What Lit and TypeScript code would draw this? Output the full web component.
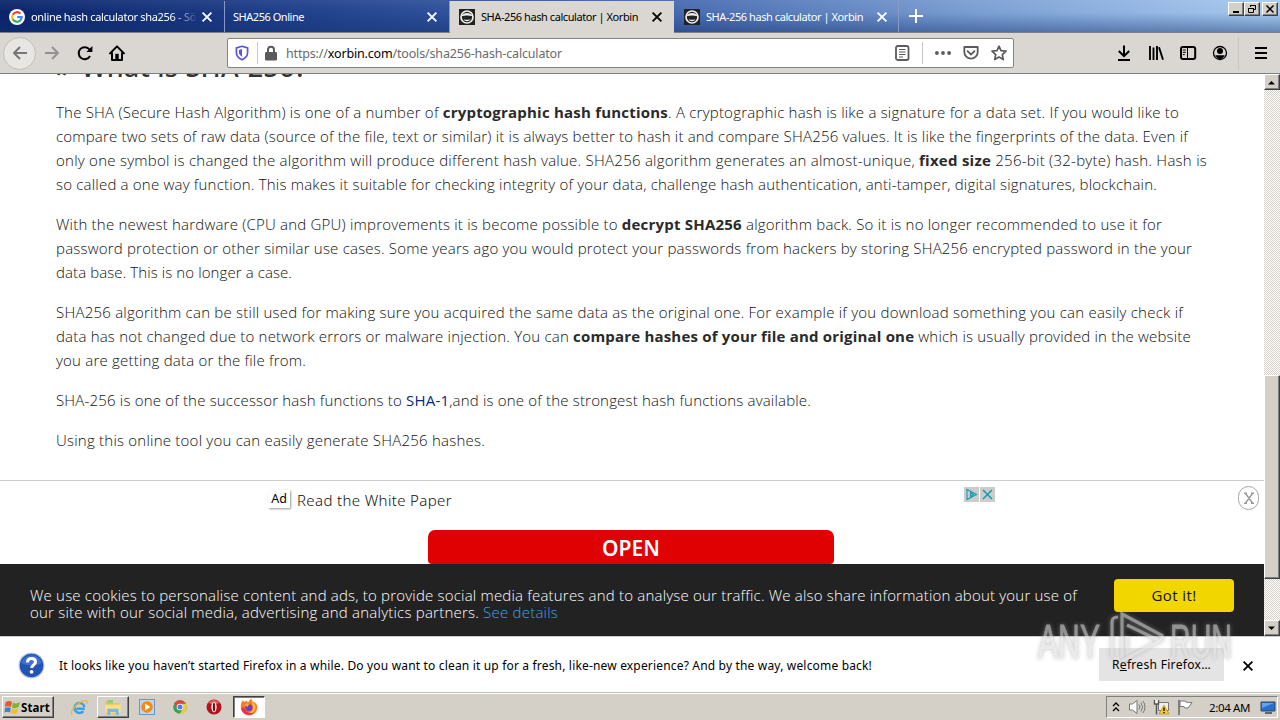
import { LitElement, html, css, svg } from "lit";
import { customElement, property, state } from "lit/decorators.js";

/** One line of text whose tracking is adjusted to fill a given width. */
@customElement("fit-line")
class FitLine extends LitElement {
  @property({ type: Number }) w = 0;
  @state() private tracking = 0;
  static styles = css`
    :host { display: block; white-space: nowrap; }
    .t { display: inline-block; white-space: nowrap; }
  `;
  firstUpdated() {
    const el = this.renderRoot.querySelector(".t") as HTMLElement;
    const n = (this.textContent || "").trim().length;
    const natural = el.getBoundingClientRect().width;
    if (this.w && n) this.tracking = (this.w - natural) / n;
  }
  render() {
    return html`<span class="t" style="letter-spacing:${this.tracking}px"><slot></slot></span>`;
  }
}

const ico = (body: unknown, s = 16) => html`<svg width=${s} height=${s} viewBox="0 0 16 16" fill="none">${body}</svg>`;

const google = ico(svg`<circle cx="8" cy="8" r="8" fill="#fff"/><g stroke-width="2.2"><path d="M3.8 5.7A4.8 4.8 0 0 1 11.4 4.6" stroke="#ea4335"/><path d="M3.8 5.7a4.8 4.8 0 0 0 0 4.6" stroke="#fbbc05"/><path d="M3.8 10.3a4.8 4.8 0 0 0 7.4 1.2" stroke="#34a853"/><path d="M8.2 8h4.5a4.8 4.8 0 0 1-1.6 3.6" stroke="#4285f4"/></g>`);
const xorbin = ico(svg`<path fill="#222" d="M0 0h16v16H0z"/><circle cx="8" cy="8" r="6" stroke="#eee" stroke-width="1.7" fill="#222"/><path d="M2.500 7.200q1.500-3.200 5.500-3.200t5.500 3.200q-5.500-1.600-11 0M4.500 10.200q3.500 1.200 7 0-1 2-3.500 2t-3.500-2" fill="#eee"/>`);
const cross = ico(svg`<path d="m3.6 3.6 8.8 8.8m0-8.8-8.8 8.8" stroke="currentColor" stroke-width="1.8"/>`);
const plus = ico(svg`<path d="M8 1v14M1 8h14" stroke="#fff" stroke-width="2"/>`);
const back = ico(svg`<path d="M15 8H2m6-6L2 8l6 6" stroke="#777" stroke-width="2" stroke-linejoin="round"/>`);
const fwd = ico(svg`<path d="M1 8h13M8 2l6 6-6 6" stroke="#949290" stroke-width="2" stroke-linejoin="round"/>`);
const reload = ico(svg`<path d="M13 11a6 6 0 1 1-.5-6.5" stroke="#000" stroke-width="2"/><path d="M15.4 1v6h-6z" fill="#000"/>`);
const home = ico(svg`<path d="m1 8.4 7-7 7 7M3 8v7h10V8" stroke="#000" stroke-width="2" stroke-linejoin="round" stroke-linecap="round"/><path d="M6.3 14V8.8h3.4V14z" fill="#000"/>`);
const shield = ico(svg`<path d="M8 1.3 13.6 3v4.4c0 3.6-2.6 6-5.6 7.4-3-1.4-5.6-3.8-5.6-7.4V3z" stroke="#5a52e0" stroke-width="1.7"/><path d="M8 4v7.8C6.200 10.700 5 9.300 5 7.300V4.900z" fill="#5a52e0"/>`);
const lock = ico(svg`<path d="M5 8V4.800a3 3 0 0 1 6 0V8" stroke="#5b5b5b" stroke-width="2"/><rect x="2" y="7" width="12" height="8.500" rx="1.200" fill="#5b5b5b"/>`);
const reader = ico(svg`<rect x="2" y="1" width="12.500" height="14" rx="1.800" stroke="#5b5b5b" stroke-width="1.800"/><path d="M5 4.500h6.500M5 7h6.500M5 9.500h6.500M5 12h4" stroke="#5b5b5b"/>`);
const dots = ico(svg`<g fill="#5b5b5b"><circle cx="1.900" cy="8" r="1.900"/><circle cx="8" cy="8" r="1.900"/><circle cx="14.100" cy="8" r="1.900"/></g>`);
const pocket = ico(svg`<path d="M1.300 2h13.400v5a6.700 6.700 0 0 1-13.400 0z" stroke="#5b5b5b" stroke-width="1.800" stroke-linejoin="round"/><path d="m4.500 6.200 3.500 3.300 3.500-3.300" stroke="#5b5b5b" stroke-width="1.800" stroke-linecap="round"/>`);
const star = ico(svg`<path d="m8 1.200 2 4.500 5 .5-3.700 3.400 1 5L8 12.100l-4.300 2.500 1-5L1 6.200l5-.5z" stroke="#5b5b5b" stroke-width="1.700" stroke-linejoin="round"/>`);
const download = ico(svg`<path d="M8 .5v10.500M2.800 6 8 11.200 13.200 6M2 15h12" stroke="#000" stroke-width="2"/>`);
const library = ico(svg`<path d="M2 1v14M5.500 2.500V15M9 1v14M11 2.200l4 12.500" stroke="#000" stroke-width="1.900"/>`);
const sidebar = ico(svg`<rect x="1" y="2" width="14.200" height="12" rx="2" stroke="#000" stroke-width="2"/><path d="M7.500 2v12M2.800 5h3M2.800 7.300h3M2.800 9.600h2" stroke="#000"/>`);
const account = ico(svg`<circle cx="8" cy="8" r="6.500" stroke="#000" stroke-width="1.300"/><circle cx="8" cy="6" r="3" fill="#000"/><path d="M3.300 10.200h9.400q-1.500 3.700-4.700 3.700t-4.700-3.700" fill="#000"/>`);
const menu = ico(svg`<path d="M2 3h12M2 8h12M2 13h12" stroke="#000" stroke-width="2"/>`);

const flag = ico(svg`<path d="M.5 3.500q3.500-2.500 6.500-.5L6 8Q3 6.500 0 8z" fill="#e8582a"/><path d="M8 3.500q3 2 7-.5l-1.500 5q-3.500 2-6.500.5z" fill="#7cb52f"/><path d="M0 9q3-1.500 5.800 0L5 13.500q-2.500-1.500-5.500 0z" fill="#3f7fd0"/><path d="M7 9.500q3 1.500 6.200-.3L12 14q-3 1.800-6 0z" fill="#f6bc2b"/>`, 16);
const ie = ico(svg`<path d="M13 9.200H5m7.600-1.600a4.700 4.700 0 1 0-1 3.800" stroke="#3ba0e4" stroke-width="2.300"/><path d="M.8 14.600C-1.500 10 9 .8 14.600 1.500c1 .4.700 2-.1 3" stroke="#e9b63a" stroke-width="1.200"/>`, 17);
const folder = ico(svg`<path d="M1 3h5l1 1.500h7V14H1z" fill="#e9c557"/><path d="M3 1.800h5v3H3z" fill="#8fce7b"/><path d="M1 6h14v7H1z" fill="#f8e08b"/><path d="M3 15V9.500h10V15h-2.500v-2.500h-5V15z" fill="#79b9e2"/>`, 18);
const wmp = ico(svg`<rect x=".5" y=".5" width="15" height="15" fill="#bcd6ee" stroke="#5f9bcc"/><circle cx="8" cy="8" r="5.800" fill="#f28a18"/><path d="M6 4.600 11.400 8 6 11.400z" fill="#fff"/>`, 16);
const chrome = ico(svg`<circle cx="8" cy="8" r="6.800" fill="#35a456"/><path d="M2.100 4.600A6.800 6.800 0 0 1 14 4.800H8L5 9.500z" fill="#df4738"/><path d="M14 4.800a6.800 6.800 0 0 1-6.300 10l3.200-5.200L10.600 4.800z" fill="#f7c934"/><circle cx="8" cy="8" r="3.300" fill="#fff"/><circle cx="8" cy="8" r="2.500" fill="#4483ed"/>`, 16);
const opera = ico(svg`<circle cx="8" cy="8" r="7.500" fill="#b3141b"/><path d="M2 4a7.500 7.500 0 0 1 12 0q-6 2-12 0" fill="#de5b58"/><ellipse cx="8" cy="8" rx="2.600" ry="5.300" fill="#fff"/><ellipse cx="8" cy="8" rx="1.200" ry="4.500" fill="#7c0c10"/>`, 16);
const firefox = ico(svg`<path d="M1.200 4.500 2.300 2l1.500 1.500L5.500 2.200 7 4l3-3.500 1 2.300q4.800 2 4.300 6.200A7.300 7.300 0 0 1 .8 9.200Q.5 6.600 1.200 4.500" fill="#ff7b25"/><path d="M10 .5q.2 2.300 2.400 4.200 2 2.300 1 5.300-1.500 4-5.500 3.600 5-3 3.500-7z" fill="#ffc630"/><path d="M1 9a7.200 7.200 0 0 0 12 4Q6 15 3.500 8z" fill="#e8334a"/><circle cx="7.900" cy="8.600" r="3.100" fill="#713bc4"/><path d="M4 5.200q3-1 4.500 1-1.500 0-2 2z" fill="#ffb02c"/>`, 18);

@customElement("app-root")
class AppRoot extends LitElement {
  static styles = css`
    * { box-sizing: border-box; }
    :host { display: flex; flex-direction: column; width: 1280px; height: 720px; overflow: hidden; position: relative; background: #fff; color: #000; font: 12px "Noto Sans", "Open Sans", sans-serif; }
    svg { display: block; flex: none; overflow: visible; }
    .tabs { height: 33px; flex: none; display: flex; align-items: flex-end; background: linear-gradient(180deg, #ffffff10, #10307000 40%, #10307070), linear-gradient(90deg, #0a246a 0, #22428e 25%, #4468ae 52%, #7a9dd2 76%, #a6caf0 100%); border-bottom: 1px solid #7d7f82; }
    .tab { height: 31px; display: flex; align-items: center; color: #fff; width: 225px; padding: 0 9px 0 9px; border-right: 1px solid #8799c4; font-size: 11px; }
    .tab.on { background: #dad7d2; color: #000; height: 32px; margin-bottom: -1px; width: 224px; border: 0; padding-bottom: 1px; }
    .tab.last { padding-left: 10px; padding-right: 8px; }
    .tab .name { margin-left: 6px; flex: 1; }
    .tab.first { padding-right: 0; }
    .tab.first .name { -webkit-mask: linear-gradient(90deg, #000 140px, #0003 163px, #0000 165px); flex: 0 0 168px; }
    .tab .name.flush { margin-left: -1px; }
    .new { margin: 0 0 8px 9px; }
    .wins { margin-left: auto; align-self: flex-start; display: flex; padding: 2px 2px 0 0; }
    .win { width: 16px; height: 14px; background: #d4d0c8; border: 1px solid; border-color: #fff #404040 #404040 #fff; box-shadow: inset -1px -1px #808080; display: grid; place-items: center; }
    .win.gap { margin-left: 2px; }
    .bar { height: 41px; flex: none; background: #dad7d2; border-bottom: 1px solid #808080; display: flex; align-items: center; padding-left: 3px; }
    .circle { width: 33px; height: 33px; border-radius: 50%; background: #e8e6e3; border: 1px solid #c0bdb9; display: grid; place-items: center; margin-right: 8px; }
    .fwd { margin-right: 17px; }
    .reload { margin-right: 16px; }
    .url { margin-left: 102px; width: 787px; height: 30px; background: #fff; border: 1px solid #858482; border-radius: 2px; display: flex; align-items: center; padding: 0 6px; color: #6a6a6a; font-size: 12.500px; }
    .url b { color: #000; font-weight: 400; }
    .vr { width: 1px; height: 22px; background: #c8c8c8; }
    .vr.v1 { margin: 0 5px 0 7px; }
    .vr.v2 { margin: 0 12px; }
    .pocket { margin: 0 12px; }
    .address { margin-left: 7px; flex: 1; }
    .tools { display: flex; align-items: center; gap: 16px; margin-left: 102px; }
    .tools .vr { height: 33px; margin: 0 -8px 0 -6px; background: #c8c5c0; }
    .menu { margin-left: 6px; }
    .body { display: flex; height: 562px; flex: none; }
    .view { width: 1264px; display: flex; flex-direction: column; background: #fff; }
    .article { height: 406px; overflow: hidden; padding-left: 56px; color: #111; font: 300 15px/24px "Open Sans", "Noto Sans", sans-serif; }
    .article h1 { margin: -23px 0 17px; height: 32px; font: 500 27px/32px "Noto Sans", sans-serif; color: #333; display: flex; gap: 9px; }
    .article p { margin: 0 0 16px; }
    .article b { font-weight: 700; color: #2a2a2a; }
    .article .link { color: #002a7c; font-weight: 400; }
    .ad { height: 84px; border-top: 1px solid #ccc; display: grid; grid-template-columns: 428px 406px 1fr; align-items: start; }
    .adline { grid-column: 1 / 3; height: 49px; display: flex; padding: 9px 0 0 268px; color: #111; font: 300 15px/20px "Noto Sans", sans-serif; }
    .tag { height: 18px; width: 22px; margin-right: 7px; background: #fff; box-shadow: 1px 1px 2px #999; font: 12.500px/18px "Noto Sans", sans-serif; color: #000; text-align: center; }
    .choices { display: flex; gap: 1px; padding: 6px 0 0 130px; height: 49px; }
    .chip { width: 15px; height: 15px; background: #ccc; display: grid; place-items: center; }
    .xring { margin: -1px 0 0 242px; width: 21px; height: 24px; border: 1px solid #a5a5a5; border-radius: 11px; display: grid; place-items: center; }
    .open { grid-column: 2; height: 34px; border-radius: 7px 7px 4px 4px; background: #e00202; color: #fff; font: 600 21px/36px "Noto Sans", sans-serif; display: flex; justify-content: center; }
    .cookie { height: 72px; background: #222; color: #fff; display: flex; align-items: flex-start; justify-content: space-between; padding: 15px 30px 0; font: 300 15px/17px "Open Sans", sans-serif; }
    .copy { padding-top: 8px; }
    .cookie a { color: #38a5e8; }
    .got { width: 120px; height: 33px; border-radius: 4px; background: #f1d600; color: #111; display: flex; justify-content: center; line-height: 33px; font-weight: 400; }
    .scroll { width: 16px; display: flex; flex-direction: column; background: repeating-conic-gradient(#fff 0 25%, #d4d0c8 0 50%) 0 0 / 2px 2px; }
    .sb { height: 16px; display: grid; place-items: center; flex: none; background: #d4d0c8; border: 1px solid; border-color: #fff #404040 #404040 #fff; box-shadow: inset -1px -1px #808080; }
    .space { height: 285px; }
    .thumb { height: 204px; background: #d4d0c8; border: 1px solid; border-color: #fff #404040 #404040 #fff; box-shadow: inset -1px -1px #808080; margin-bottom: auto; }
    .notice { height: 56px; flex: none; background: #fff; border-top: 1px solid #ccc; display: flex; align-items: center; padding: 2px 24px 0 18px; font-size: 12px; }
    .notice .msg { margin-left: 14px; flex: 1; }
    .refresh { width: 125px; height: 33px; background: #e4e4e4; display: flex; justify-content: center; line-height: 34px; margin: -2px 16px 0 0; }
    .key { text-decoration: underline; }
    .task { height: 28px; flex: none; background: #d4d0c8; border-top: 1px solid #c0bcb4; box-shadow: inset 0 1px #fff; display: flex; align-items: center; padding: 2px 2px 1px; }
    .btn { height: 22px; border: 1px solid; border-color: #fff #404040 #404040 #fff; box-shadow: inset -1px -1px #808080; display: flex; align-items: center; justify-content: center; width: 32px; }
    .start { width: 52px; justify-content: flex-start; padding-left: 2px; font-weight: 700; font-size: 11.500px; }
    .btn.on { background: #fff; border-color: #404040 #fff #fff #404040; box-shadow: inset 1px 1px #808080; }
    .icons { display: flex; align-items: center; margin-left: 17px; }
    .icons .e { margin-right: 9px; } .icons .a { margin-right: 10px; } .icons .b { margin-right: 17px; } .icons .c { margin-right: 18px; } .icons .d { margin-right: 11px; }
    .tray { margin-left: auto; width: 172px; height: 22px; border: 1px solid; border-color: #808080 #fff #fff #808080; display: flex; align-items: center; padding-left: 5px; }
    .tray .clock { margin: 0 10px 0 8px; font-size: 11.500px; }
    .vol { margin-left: 8px; }
    .net, .act { margin-left: 7px; }
    .tray .act { margin-right: 7px; }
    .mark { position: absolute; left: 1034px; top: 608px; pointer-events: none; opacity: .6; filter: drop-shadow(0 0 2px #999); }
    .mark text { font-family: "Liberation Sans", sans-serif; }
  `;

  private tab(title: string, width: number, cls = "", icon: unknown = "") {
    return html`<div class="tab ${cls}">${icon}<div class="name ${icon ? "" : "flush"}"><fit-line w=${width}>${title}</fit-line></div>${cross}</div>`;
  }

  render() {
    return html`
      <div class="tabs">
        ${this.tab("online hash calculator sha256 - Sö", 165, "first", google)}
        ${this.tab("SHA256 Online", 71)}
        ${this.tab("SHA-256 hash calculator | Xorbin", 157, "on", xorbin)}
        ${this.tab("SHA-256 hash calculator | Xorbin", 157, "last", xorbin)}
        <div class="new">${plus}</div>
        <div class="wins">
          <div class="win"><svg width="10" height="10"><path d="M2 8h6" stroke="#000" stroke-width="2"/></svg></div>
          <div class="win"><svg width="10" height="10" fill="none" stroke="#000"><path d="M3.500 3V1.500h5v4H7M3 1.500h6M1.500 4.500h5v4h-5zM1 4.500h6"/></svg></div>
          <div class="win gap"><svg width="10" height="10"><path d="m1.500 1.500 7 7m0-7-7 7" stroke="#000" stroke-width="1.500"/></svg></div>
        </div>
      </div>
      <div class="bar">
        <div class="circle">${back}</div>
        <div class="fwd">${fwd}</div><div class="reload">${reload}</div>${home}
        <div class="url">
          ${shield}<div class="vr v1"></div>${lock}
          <div class="address"><fit-line w="276">https://<b>xorbin.com</b>/tools/sha256-hash-calculator</fit-line></div>
          ${reader}<div class="vr v2"></div>${dots}<div class="pocket">${pocket}</div>${star}
        </div>
        <div class="tools">${download}${library}${sidebar}${account}<div class="vr"></div><div class="menu">${menu}</div></div>
      </div>
      <div class="body">
        <div class="view">
          <div class="article">
            <h1><fit-line w="16">»</fit-line><fit-line w="226">What is SHA-256?</fit-line></h1>
            <p>
              <fit-line w="1123">The SHA (Secure Hash Algorithm) is one of a number of <b>cryptographic hash functions</b>. A cryptographic hash is like a signature for a data set. If you would like to</fit-line>
              <fit-line w="1132">compare two sets of raw data (source of the file, text or similar) it is always better to hash it and compare SHA256 values. It is like the fingerprints of the data. Even if</fit-line>
              <fit-line w="1151">only one symbol is changed the algorithm will produce different hash value. SHA256 algorithm generates an almost-unique, <b>fixed size</b> 256-bit (32-byte) hash. Hash is</fit-line>
              <fit-line w="1101">so called a one way function. This makes it suitable for checking integrity of your data, challenge hash authentication, anti-tamper, digital signatures, blockchain.</fit-line>
            </p>
            <p>
              <fit-line w="1106">With the newest hardware (CPU and GPU) improvements it is become possible to <b>decrypt SHA256</b> algorithm back. So it is no longer recommended to use it for</fit-line>
              <fit-line w="1136">password protection or other similar use cases. Some years ago you would protect your passwords from hackers by storing SHA256 encrypted password in the your</fit-line>
              <fit-line w="236">data base. This is no longer a case.</fit-line>
            </p>
            <p>
              <fit-line w="1127">SHA256 algorithm can be still used for making sure you acquired the same data as the original one. For example if you download something you can easily check if</fit-line>
              <fit-line w="1135">data has not changed due to network errors or malware injection. You can <b>compare hashes of your file and original one</b> which is usually provided in the website</fit-line>
              <fit-line w="250">you are getting data or the file from.</fit-line>
            </p>
            <p><fit-line w="755">SHA-256 is one of the successor hash functions to <span class="link">SHA-1</span>,and is one of the strongest hash functions available.</fit-line></p>
            <p><fit-line w="429">Using this online tool you can easily generate SHA256 hashes.</fit-line></p>
          </div>
          <div class="ad">
            <div class="adline"><div class="tag">Ad</div><fit-line w="155">Read the White Paper</fit-line></div>
            <div class="choices">
              <div class="chip"><svg width="13" height="13" fill="none" stroke="#169cb0" stroke-width="1.100"><path d="M2 1.500v10l9.500-5zM5.500 4.700v3.600l3-1.800z"/></svg></div>
              <div class="chip"><svg width="13" height="13" stroke="#12a0a5" stroke-width="1.600"><path d="m2 2 9 9m0-9-9 9"/></svg></div>
              <div class="xring"><svg width="10" height="12" fill="none" stroke="#999" stroke-width="1.400"><path d="m1.500 1.500 7 9.500m0-9.500-7 9.500M0 1.300h3m4 0h3M0 11.300h3m4 0h3"/></svg></div>
            </div>
            <div class="open"><fit-line w="58">OPEN</fit-line></div>
          </div>
          <div class="cookie">
            <div class="copy">
              <fit-line w="1047">We use cookies to personalise content and ads, to provide social media features and to analyse our traffic. We also share information about your use of</fit-line>
              <fit-line w="528">our site with our social media, advertising and analytics partners. <a>See details</a></fit-line>
            </div>
            <div class="got"><fit-line w="45">Got it!</fit-line></div>
          </div>
        </div>
        <div class="scroll">
          <div class="sb"><svg width="8" height="5"><path d="M0 4.500h7L3.500 1z"/></svg></div>
          <div class="space"></div><div class="thumb"></div>
          <div class="sb"><svg width="8" height="5"><path d="M0 .5h7L3.500 4z"/></svg></div>
        </div>
      </div>
      <div class="notice">
        <svg width="27" height="27" viewBox="0 0 27 27"><circle cx="13.500" cy="13.500" r="13" fill="#b9cbe8"/><circle cx="13.500" cy="13.500" r="11.800" fill="#2553b4"/><path d="M3 11a11 11 0 0 1 21 0q-10 5-21 0" fill="#3f70cc"/><path d="M9.500 10.500q0-4 4-4t4 3.500c0 3-3.800 2.800-3.800 6" fill="none" stroke="#fff" stroke-width="3"/><circle cx="13.600" cy="19.800" r="1.900" fill="#fff"/></svg>
        <div class="msg"><fit-line w="813">It looks like you haven’t started Firefox in a while. Do you want to clean it up for a fresh, like-new experience? And by the way, welcome back!</fit-line></div>
        <div class="refresh"><fit-line w="99">R<span class="key">e</span>fresh Firefox…</fit-line></div>
        ${cross}
      </div>
      <div class="task">
        <div class="btn start">${flag}<fit-line w="29">Start</fit-line></div>
        <div class="icons"><div class="e">${ie}</div><div class="btn a">${folder}</div><div class="b">${wmp}</div><div class="c">${chrome}</div><div class="d">${opera}</div><div class="btn on">${firefox}</div></div>
        <div class="tray">
          <svg width="8" height="12" fill="none" stroke="#000" stroke-width="1.300"><path d="m1 5 3-3 3 3M1 10l3-3 3 3"/></svg>
          <svg class="vol" width="18" height="16" viewBox="0 0 18 16" fill="none" stroke="#777"><path d="M1.500 5h3L9 1.500v13L4.500 11h-3z" fill="#fff"/><path d="M11 5.500q1.500 2.500 0 5M13 3.500q3 4.500 0 9M15 2q4 6 0 12"/></svg>
          <svg class="net" width="17" height="16" viewBox="0 0 17 16"><path d="M5.500 3.500h10v8h-10z" fill="#eee" stroke="#777"/><path d="M1.500 1v4h4V1M3.500 5v10.500" fill="#fff" stroke="#555" stroke-width="1.400"/><path d="m11 6 5 9H6z" fill="#f9ca21" stroke="#b28700" stroke-width=".6"/><path d="M11 8.500v3.500m0 1v1.300" stroke="#000" stroke-width="1.300"/></svg>
          <svg class="act" width="17" height="16" viewBox="0 0 17 16" fill="#fff" stroke="#777"><path d="M2 1v15" stroke-width="1.800"/><path d="M3 2h5q1 2 7 1.500-2 3-4 5.500H8L7 7.500H3z"/></svg>
          <div class="clock"><fit-line w="41">2:04 AM</fit-line></div>
          <svg width="16" height="13"><path d="M1 1h14v9H1z" fill="#2870cc" stroke="#2b4568"/><path d="M2 2h12L2 7z" fill="#60a6e7"/><path d="M5 12h7" stroke="#345" stroke-width="1.500"/></svg>
        </div>
      </div>
      <svg class="mark" width="204" height="60" viewBox="0 0 204 60" fill="none">
        <g fill="#ddd" stroke="#ddd" stroke-width=".8" font-size="48"><text x="4" y="50" textLength="62" lengthAdjust="spacingAndGlyphs">ANY</text><text x="136" y="50" textLength="62" lengthAdjust="spacingAndGlyphs">RUN</text></g>
        <path d="M78 50V14q0-5 6-5M88 50V6l40 21.500v4L88 53M93 28v13M93 17l31 15" stroke="#ddd" stroke-width="3.200"/>
      </svg>
    `;
  }
}
